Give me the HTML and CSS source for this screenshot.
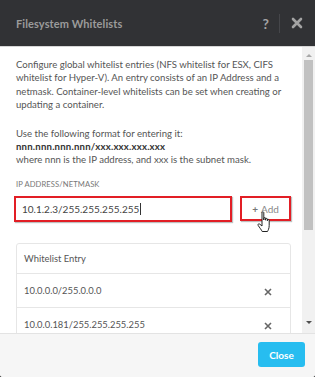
FILE: index.html
```html
<!DOCTYPE html>
<html>
<head>
<meta charset="utf-8">
<link rel="stylesheet" href="styles.css">
</head>
<body>
<div class="modal">
  <header class="hd">
    <h1 class="title">Filesystem Whitelists</h1>
    <div class="tools">
      <span class="help">?</span>
      <span class="sep"></span>
      <svg class="x-close" width="12" height="12" viewBox="0 0 12 12"><path d="M2 2 L10 10 M10 2 L2 10" stroke="#a3a3a3" stroke-width="2.6" stroke-linecap="round"/></svg>
    </div>
  </header>
  <div class="main">
    <div class="content">
      <p class="para">Configure global whitelist entries (NFS whitelist for ESX, CIFS whitelist for Hyper-V). An entry consists of an IP Address and a netmask. Container-level whitelists can be set when creating or updating a container.</p>
      <p class="para last">Use the following format for entering it:<br><b class="fmt">nnn.nnn.nnn.nnn/xxx.xxx.xxx.xxx</b><br>where nnn is the IP address, and xxx is the subnet mask.</p>
      <div class="label">IP ADDRESS/NETMASK</div>
      <div class="entry">
        <div class="input">10.1.2.3/255.255.255.255<span class="caret"></span></div>
        <div class="add"><span class="plus">+</span> Add</div>
        <svg class="hand" width="16" height="22" viewBox="0 0 16 22"><path d="M5 1.5 C5 0.7 6.8 0.7 6.8 1.5 L6.8 9 L6.8 7.2 C6.8 6.4 8.6 6.4 8.6 7.2 L8.6 9.2 L8.6 8 C8.6 7.2 10.4 7.2 10.4 8 L10.4 9.8 L10.4 9 C10.4 8.2 12.2 8.2 12.2 9 L12.2 14.5 C12.2 17.5 11 19.5 10.5 20.5 L5.2 20.5 C4.5 19 2.5 16.5 1.2 14.5 C0.5 13.4 1.6 12.3 2.7 13.1 L5 15 Z" fill="#fff" stroke="#222" stroke-width="1" stroke-linejoin="round"/></svg>
      </div>
      <div class="table">
        <div class="thead">Whitelist Entry</div>
        <div class="row"><span class="ip">10.0.0.0/255.0.0.0</span><svg class="del" width="8" height="8" viewBox="0 0 8 8"><path d="M1 1 L7 7 M7 1 L1 7" stroke="#666" stroke-width="1.6"/></svg></div>
        <div class="row"><span class="ip">10.0.0.181/255.255.255.255</span><svg class="del" width="8" height="8" viewBox="0 0 8 8"><path d="M1 1 L7 7 M7 1 L1 7" stroke="#666" stroke-width="1.6"/></svg></div>
      </div>
    </div>
    <div class="scrollbar">
      <div class="arrow up"></div>
      <div class="track"><div class="thumb"></div></div>
      <div class="arrow down"></div>
    </div>
  </div>
  <footer class="ft">
    <button class="close">Close</button>
  </footer>
</div>
</body>
</html>
```

FILE: styles.css
```css
* { box-sizing: border-box; }
html, body { margin: 0; padding: 0; background: #3a3a3a; }
body { width: 315px; height: 377px; overflow: hidden; font-family: "Lato", "Open Sans", sans-serif; }

.modal {
  width: 315px;
  height: 377px;
  display: flex;
  flex-direction: column;
  background: #fff;
  border-radius: 0 0 3px 3px;
  overflow: hidden;
}

.hd {
  height: 47px;
  flex: none;
  background: #313235;
  border-bottom: 1px solid #d6d6d6;
  display: flex;
  align-items: center;
  padding: 0 12px 0 16px;
}
.title {
  margin: 0;
  flex: 1;
  font-size: 11px;
  font-weight: 700;
  color: #9b9b9b;
  letter-spacing: 0.1px;
}
.tools { display: flex; align-items: center; }
.help { font-size: 14px; font-weight: 700; color: #a3a3a3; }
.sep { width: 1px; height: 19px; background: #45464a; margin: 0 11px 0 10px; }
.x-close { display: block; }

.main { height: 286px; flex: none; display: flex; }
.content { flex: 1; overflow: hidden; padding: 11px 11px 0 16px; }

.para {
  margin: 0 0 15px;
  font-size: 9.6px;
  line-height: 13.4px;
  color: #555;
}
.para.last { margin-bottom: 0; }
.fmt { color: #333; font-weight: 700; letter-spacing: 0.2px; }

.label {
  margin-top: 13px;
  font-size: 7.6px;
  line-height: 9px;
  color: #777;
  letter-spacing: 0.1px;
}

.entry { position: relative; display: flex; align-items: center; gap: 8px; margin: 7px 0 0 -2px; }
.input {
  width: 219px;
  height: 26px;
  border: 2px solid #e21e25;
  box-shadow: 1px 1px 1px rgba(0,0,0,0.25);
  display: flex;
  align-items: center;
  padding-left: 6px;
  font-size: 10px;
  color: #444;
}
.caret { display: inline-block; width: 1px; height: 12px; background: #333; margin-left: 1px; }
.add {
  width: 51px;
  height: 25px;
  border: 2px solid #e21e25;
  box-shadow: 1px 1px 1px rgba(0,0,0,0.25);
  display: flex;
  align-items: center;
  justify-content: center;
  font-size: 10px;
  color: #888;
}
.plus { font-weight: 700; margin-right: 3px; color: #777; }
.hand { position: absolute; left: 243px; top: 15px; }

.table {
  margin-top: 21px;
  border: 1px solid #e6e6e6;
  border-radius: 3px;
}
.thead {
  height: 30px;
  display: flex;
  align-items: center;
  padding-left: 7px;
  font-size: 9.4px;
  color: #555;
  border-bottom: 1px solid #e6e6e6;
}
.row {
  height: 34px;
  display: flex;
  align-items: center;
  justify-content: space-between;
  padding: 0 18px 0 7px;
  font-size: 9.4px;
  color: #555;
  border-bottom: 1px solid #e6e6e6;
}
.del { display: block; margin-top: 4px; }

.scrollbar {
  width: 13px;
  flex: none;
  background: #f1f1f1;
  display: flex;
  flex-direction: column;
  align-items: center;
}
.arrow { width: 0; height: 0; border-left: 3px solid transparent; border-right: 3px solid transparent; }
.arrow.up { margin-top: 7px; border-bottom: 3px solid #a8a8a8; }
.arrow.down { margin-bottom: 9px; border-top: 3px solid #505050; }
.track { flex: 1; width: 100%; padding: 3px 2px 0; }
.thumb { height: 170px; background: #c1c1c1; }

.ft {
  flex: 1;
  background: #f6f6f6;
  border-top: 1px solid #e3e3e3;
  display: flex;
  align-items: flex-start;
  justify-content: flex-end;
  padding: 8px 10px 0 0;
}
.close {
  width: 47px;
  height: 25px;
  border: none;
  border-radius: 3px;
  background: #27bdf0;
  color: #fff;
  font-family: "Lato", sans-serif;
  font-weight: 700;
  font-size: 10px;
  padding: 0;
}
```
